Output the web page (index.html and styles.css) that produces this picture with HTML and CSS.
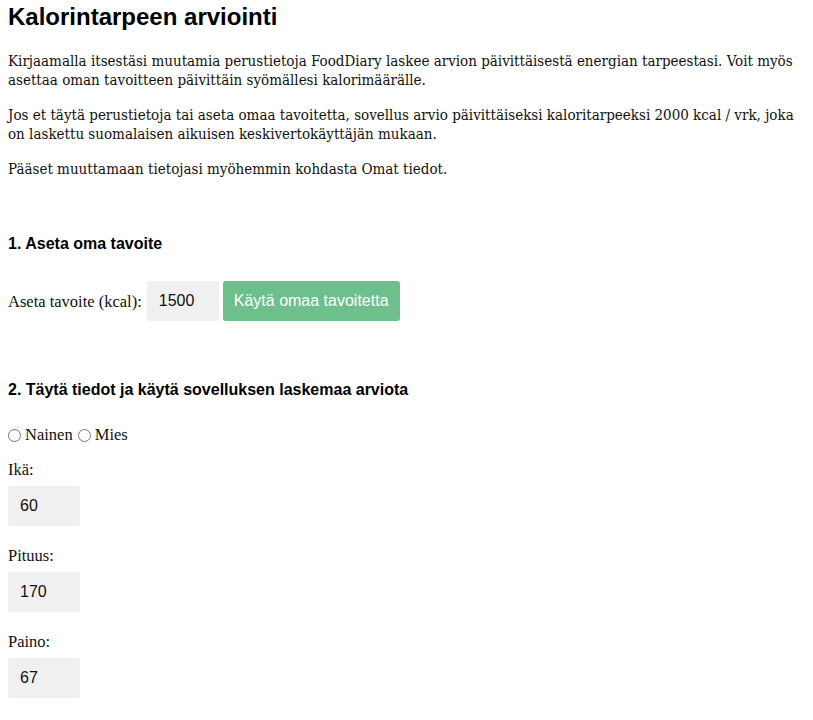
FILE: index.html
```html
<!DOCTYPE html>
<html lang="fi">
<head>
<meta charset="utf-8">
<title>Kalorintarpeen arviointi</title>
<link rel="stylesheet" href="styles.css">
</head>
<body>
<div class="page">
  <h1 class="title">Kalorintarpeen arviointi</h1>
  <p class="text">Kirjaamalla itsestäsi muutamia perustietoja FoodDiary laskee arvion päivittäisestä energian tarpeestasi. Voit myös asettaa oman tavoitteen päivittäin syömällesi kalorimäärälle.</p>
  <p class="text">Jos et täytä perustietoja tai aseta omaa tavoitetta, sovellus arvio päivittäiseksi kaloritarpeeksi 2000 kcal / vrk, joka on laskettu suomalaisen aikuisen keskivertokäyttäjän mukaan.</p>
  <p class="text">Pääset muuttamaan tietojasi myöhemmin kohdasta Omat tiedot.</p>

  <h3 class="section-title first">1. Aseta oma tavoite</h3>
  <div class="goal-row">
    <label class="label inline" for="goal">Aseta tavoite (kcal):</label>
    <input class="field" id="goal" type="text" value="1500">
    <button class="btn" type="button">Käytä omaa tavoitetta</button>
  </div>

  <h3 class="section-title second">2. Täytä tiedot ja käytä sovelluksen laskemaa arviota</h3>
  <div class="radio-row">
    <label class="radio-label"><input class="radio" type="radio" name="sex">Nainen</label>
    <label class="radio-label second-radio"><input class="radio" type="radio" name="sex">Mies</label>
  </div>

  <div class="group">
    <label class="label" for="age">Ikä:</label>
    <input class="field" id="age" type="text" value="60">
  </div>
  <div class="group">
    <label class="label" for="height">Pituus:</label>
    <input class="field" id="height" type="text" value="170">
  </div>
  <div class="group">
    <label class="label" for="weight">Paino:</label>
    <input class="field" id="weight" type="text" value="67">
  </div>
</div>
</body>
</html>
```

FILE: styles.css
```css
html, body {
  margin: 0;
  padding: 0;
  background: #ffffff;
}

.page {
  padding: 3px 8px 20px;
  color: #111;
}

.title {
  margin: 0 0 21px;
  font-family: "Liberation Sans", Arial, sans-serif;
  font-size: 24px;
  line-height: 28px;
  font-weight: bold;
  color: #000;
}

.text {
  margin: 0 0 16px;
  font-family: "DejaVu Serif Condensed", "DejaVu Serif", serif;
  font-stretch: condensed;
  font-size: 15px;
  line-height: 19px;
  color: #111;
}

.section-title {
  margin: 0;
  font-family: "Liberation Sans", Arial, sans-serif;
  font-size: 16px;
  line-height: 19px;
  font-weight: bold;
  color: #000;
}

.section-title.first {
  margin-top: 55px;
}

.section-title.second {
  margin-top: 59px;
}

.goal-row {
  display: flex;
  align-items: center;
  margin-top: 28px;
}

.label {
  display: block;
  font-family: "Liberation Serif", "Times New Roman", serif;
  font-size: 16.5px;
  line-height: 19px;
  color: #111;
  margin-bottom: 7px;
}

.label.inline {
  margin: 0 5px 0 0;
}

.field {
  box-sizing: border-box;
  width: 72px;
  height: 40px;
  padding: 0 12px;
  border: none;
  border-radius: 3px;
  background: #f0f0f0;
  font-family: "Liberation Sans", Arial, sans-serif;
  font-size: 16px;
  color: #111;
  outline: none;
  display: block;
}

.btn {
  box-sizing: border-box;
  height: 40px;
  margin-left: 4px;
  padding: 0 11px;
  border: none;
  border-radius: 3px;
  background: #6dbf8b;
  color: #fff;
  font-family: "Liberation Sans", Arial, sans-serif;
  font-size: 16px;
}

.radio-row {
  margin-top: 26px;
  height: 20px;
  font-family: "Liberation Serif", "Times New Roman", serif;
  font-size: 16.5px;
  line-height: 20px;
  color: #111;
}

.radio-label {
  display: inline-flex;
  align-items: center;
}

.second-radio {
  margin-left: 1px;
}

.radio {
  width: 13px;
  height: 13px;
  margin: 0 4px 0 0;
}

.group {
  margin-top: 15px;
}

.group + .group {
  margin-top: 20px;
}
```
